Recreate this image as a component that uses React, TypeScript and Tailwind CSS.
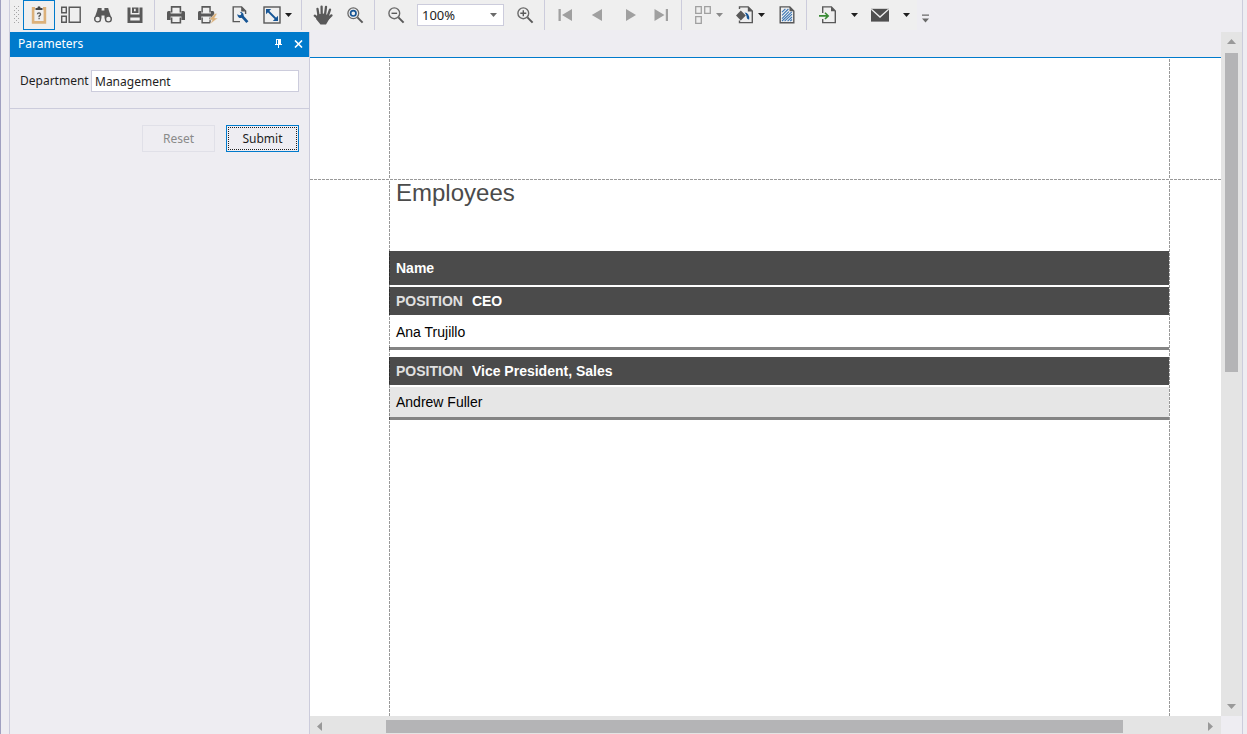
import React, { useState } from "react";

interface IconProps {
  children: React.ReactNode;
}

interface ToolButtonProps {
  label: string;
  active?: boolean;
  disabled?: boolean;
  children: React.ReactNode;
}

const Icon: React.FC<IconProps> = ({ children }) => (
  <svg width="18" height="18" viewBox="0 0 18 18" fill="none" className="shrink-0">
    {children}
  </svg>
);

const Caret: React.FC = () => (
  <svg width="7" height="4" viewBox="0 0 7 4" className="shrink-0">
    <path d="M0 0H7L3.5 4Z" fill="currentColor" />
  </svg>
);

const ToolButton: React.FC<ToolButtonProps> = ({ label, active, disabled, children }) => (
  <button
    aria-label={label}
    title={label}
    disabled={disabled}
    className={`flex h-[30px] w-8 shrink-0 items-center justify-center ${
      active ? "border border-[#007acc]" : ""
    }`}
  >
    {children}
  </button>
);

// Icon and caret in one button
const DropButton: React.FC<ToolButtonProps> = ({ label, disabled, children }) => (
  <button
    aria-label={label}
    title={label}
    disabled={disabled}
    className="flex h-[30px] w-[42px] shrink-0 items-center gap-1 pl-[7px] text-[#1e1e1e] disabled:text-[#8a8a8a]"
  >
    {children}
    <Caret />
  </button>
);

const CaretButton: React.FC<{ label: string }> = ({ label }) => (
  <button
    aria-label={label}
    className="flex h-[30px] w-5 shrink-0 items-center justify-center text-[#1e1e1e]"
  >
    <Caret />
  </button>
);

const Separator: React.FC = () => (
  <div className="mr-[5px] ml-[3px] h-[30px] w-px shrink-0 bg-[#ccccdc]" />
);

const PrinterShape: React.FC = () => (
  <>
    <path d="M4.6 6.5V0.9H13.4V6.5" stroke="#595959" strokeWidth="1.6" />
    <path
      d="M1.5 5H3.6V7.6H14.4V5H16.5Q18 5 18 6.5V14H14.4V10.4H3.6V14H0V6.5Q0 5 1.5 5Z"
      fill="#595959"
    />
    <path d="M4.6 11.5V16.8H13.4V11.5" stroke="#595959" strokeWidth="1.6" />
  </>
);

const Toolbar: React.FC = () => {
  const [zoom, setZoom] = useState("100%");

  return (
    <div className="flex h-8 shrink-0 items-start">
      <div className="flex h-[30px] items-center bg-[#efefef] pr-px">
        {/* Drag handle */}
        <svg width="13" height="18" viewBox="0 0 13 18" className="shrink-0">
          <defs>
            <pattern id="grip" width="4" height="4" patternUnits="userSpaceOnUse">
              <rect width="1" height="1" fill="#a5a5a5" />
              <rect x="2" y="2" width="1" height="1" fill="#a5a5a5" />
            </pattern>
          </defs>
          <rect x="4" width="5" height="18" fill="url(#grip)" />
        </svg>

        <ToolButton label="Parameters" active>
          <Icon>
            <path d="M5 2.4H3.1V16.4H14.9V2.4H13" stroke="#dcb17a" strokeWidth="2.6" />
            <path d="M5.5 4V2H7.4Q7.5 0.2 9 0.2T10.6 2H12.5V4Z" fill="#444" />
            <path
              d="M7.4 8.2Q7.5 6.9 9 6.9T10.6 8.3Q10.6 9.3 9.1 10.1V11.2M9.1 12V13.3"
              stroke="#555"
              strokeWidth="1.3"
            />
          </Icon>
        </ToolButton>
        <ToolButton label="Thumbnails">
          <svg width="20" height="18" viewBox="0 0 20 18" fill="none">
            <path
              d="M0.7 1.2H5.3V6.8H0.7ZM0.7 10.2H5.3V16.2H0.7ZM8.2 1.2H19.2V16.2H8.2Z"
              stroke="#595959"
              strokeWidth="1.4"
            />
          </svg>
        </ToolButton>
        <ToolButton label="Search">
          <Icon>
            <path
              d="M3.8 2H7.6V4.6H10.4V2H14.2L15 5L17.6 12.5H10.5V9.5H7.5V12.5H0.4L3 5Z"
              fill="#595959"
            />
            <circle cx="3.6" cy="13" r="2.9" fill="#efefef" stroke="#595959" strokeWidth="1.4" />
            <circle cx="14.4" cy="13" r="2.9" fill="#efefef" stroke="#595959" strokeWidth="1.4" />
          </Icon>
        </ToolButton>
        <ToolButton label="Save">
          <Icon>
            <path
              fillRule="evenodd"
              d="M1.5 1.5H4.5V8.5H13.5V1.5H16.5V17H1.5ZM4.3 11.5H13.7V14.5H4.3Z"
              fill="#595959"
            />
            <path fillRule="evenodd" d="M6 1.5H12.5V7H6ZM8 2.8V5.2H9.7V2.8Z" fill="#595959" />
          </Icon>
        </ToolButton>
        <Separator />

        <ToolButton label="Print">
          <Icon>
            <PrinterShape />
          </Icon>
        </ToolButton>
        <ToolButton label="Quick Print">
          <svg width="20" height="18" viewBox="0 0 20 18" fill="none">
            <g transform="scale(0.9 1)">
              <PrinterShape />
            </g>
            <path
              d="M17 7.6L11 13.8H14.2L12.2 18L20 12H16.6L19.2 7.6Z"
              fill="#dcb17a"
              stroke="#efefef"
              strokeWidth="0.5"
            />
          </svg>
        </ToolButton>
        <ToolButton label="Page Setup">
          <Icon>
            <path d="M14.6 8V5L10.6 0.9H2.2V15.6H9" stroke="#595959" strokeWidth="1.4" />
            <path d="M10.2 0.8V5.4H14.8Z" fill="#595959" />
            <path d="M10.6 9.6L16.4 16.2" stroke="#165595" strokeWidth="2.8" />
            <path
              d="M8.6 5.7L10.4 7.6L9.8 9L8 9.3L6.4 8Q6.1 11 8 11.7Q9.8 12.4 11.6 11.6Q13.3 9.6 12.4 7.7Q11.2 5.7 8.6 5.7Z"
              fill="#165595"
            />
          </Icon>
        </ToolButton>
        <DropButton label="Scale">
          <Icon>
            <rect x="1" y="1" width="16" height="16" stroke="#595959" strokeWidth="1.4" />
            <path d="M5 5L13 13" stroke="#165595" strokeWidth="1.8" />
            <path d="M3 3H8.2L3 8.2ZM15 15H9.8L15 9.8Z" fill="#165595" />
          </Icon>
        </DropButton>
        <Separator />

        <ToolButton label="Hand Tool">
          <svg width="20" height="20" viewBox="0 0 20 20" fill="none">
            <path
              d="M5.6 11L4.5 3.8M8.7 10L8.6 1.6M12 10L13 1.8M14.6 11.5L17 4.6M6.5 14.5L1.8 10.7M14.8 14L18.4 10.4"
              stroke="#595959"
              strokeWidth="2.3"
              strokeLinecap="round"
            />
            <path d="M4.4 9.5L10 8.5L16 10.2L17.4 12L14.5 17L13 19.6H7.5L3 14Z" fill="#595959" />
          </svg>
        </ToolButton>
        <ToolButton label="Magnifier">
          <Icon>
            <circle cx="7.3" cy="7.3" r="5.4" stroke="#6a6a6a" strokeWidth="1.3" />
            <circle cx="7.3" cy="7.3" r="2.7" stroke="#165595" strokeWidth="1.7" />
            <path d="M11.4 11.4L16.6 16.6" stroke="#595959" strokeWidth="2" />
          </Icon>
        </ToolButton>
        <Separator />

        <ToolButton label="Zoom Out">
          <Icon>
            <circle cx="7.3" cy="7.3" r="5.4" stroke="#6a6a6a" strokeWidth="1.4" />
            <path d="M4.5 7.3H10.1" stroke="#595959" strokeWidth="1.4" />
            <path d="M11.4 11.4L16.6 16.6" stroke="#595959" strokeWidth="2" />
          </Icon>
        </ToolButton>
        <div className="relative mx-[5px] flex h-[22px] w-[87px] items-center text-[#6a6a6a]">
          <select
            aria-label="Zoom"
            value={zoom}
            onChange={(e) => setZoom(e.target.value)}
            className="h-full w-full appearance-none border border-[#ccccdc] bg-white pl-1 text-[13px] text-[#1e1e1e]"
          >
            <option>50%</option>
            <option>100%</option>
            <option>200%</option>
          </select>
          <span className="pointer-events-none absolute right-[7px]">
            <Caret />
          </span>
        </div>
        <ToolButton label="Zoom In">
          <Icon>
            <circle cx="7.3" cy="7.3" r="5.4" stroke="#6a6a6a" strokeWidth="1.4" />
            <path d="M4.3 7.3H10.3M7.3 4.3V10.3" stroke="#595959" strokeWidth="1.4" />
            <path d="M11.4 11.4L16.6 16.6" stroke="#595959" strokeWidth="2" />
          </Icon>
        </ToolButton>
        <Separator />

        <ToolButton label="First Page" disabled>
          <Icon>
            <path d="M1.5 3H3.8V15H1.5ZM15 3V15L5 9Z" fill="#a0a0a0" />
          </Icon>
        </ToolButton>
        <ToolButton label="Previous Page" disabled>
          <Icon>
            <path d="M13 3V15L2.8 9Z" fill="#a0a0a0" />
          </Icon>
        </ToolButton>
        <ToolButton label="Next Page" disabled>
          <Icon>
            <path d="M5 3V15L15 9Z" fill="#a0a0a0" />
          </Icon>
        </ToolButton>
        <ToolButton label="Last Page" disabled>
          <Icon>
            <path d="M1.5 3V15L11.5 9ZM12.8 3H15V15H12.8Z" fill="#a0a0a0" />
          </Icon>
        </ToolButton>
        <Separator />

        <DropButton label="Multiple Pages" disabled>
          <Icon>
            <path
              d="M1.7 0.7H7.3V7.3H1.7ZM10.7 0.7H16.3V7.3H10.7ZM1.7 10.7H7.3V17.3H1.7Z"
              stroke="#a0a0a0"
              strokeWidth="1.3"
            />
          </Icon>
        </DropButton>
        <DropButton label="Page Color">
          <Icon>
            <path d="M3.5 3V0.9H12.2L16.3 5V16.6H3.5V14.4" stroke="#595959" strokeWidth="1.4" />
            <path d="M11.8 0.8V5.4H16.5Z" fill="#595959" />
            <path d="M0 9.5L4.8 4.6L9.8 9.5L4.8 14.4Z" fill="#595959" />
            <path d="M8.6 6.4Q13.6 6.8 13.2 13.4Q10.8 13.6 10.6 10.5Q10.4 8.2 8.6 6.4Z" fill="#165595" />
          </Icon>
        </DropButton>
        <ToolButton label="Watermark">
          <Icon>
            <path d="M2.2 0.9H11.8L15.8 5V16.7H2.2Z" stroke="#595959" strokeWidth="1.4" />
            <path d="M11.5 0.8V5.2H16Z" fill="#595959" />
            <path
              d="M4 6.2L7.4 2.8M4 9.4L10.4 3M4 12.6L10.9 5.7M4 15L13.8 5.9M6.6 15.2L14 8.2M9.6 15.2L14 11M12.2 15.2L14 13.5"
              stroke="#3a76b5"
              strokeWidth="1.1"
            />
          </Icon>
        </ToolButton>
        <Separator />

        <ToolButton label="Export Document">
          <Icon>
            <path d="M3.7 7V0.9H12.4L16.3 5V16.6H3.7V13" stroke="#595959" strokeWidth="1.4" />
            <path d="M12 0.8V5.2H16.5Z" fill="#595959" />
            <path d="M0 9.9H9M6 6.8L9.2 9.9L6 13" stroke="#388a34" strokeWidth="1.6" />
          </Icon>
        </ToolButton>
        <CaretButton label="Export formats" />
        <ToolButton label="Send E-mail">
          <Icon>
            <path d="M0 2.8H18V15.6H0Z" fill="#4f4f4f" />
            <path d="M0.3 3.2L9 11L17.7 3.2" stroke="#efefef" strokeWidth="1.4" />
          </Icon>
        </ToolButton>
        <CaretButton label="E-mail formats" />
      </div>
      {/* Overflow */}
      <button aria-label="More" className="flex h-[30px] w-4 items-center justify-center pt-[7px]">
        <svg width="7" height="9" viewBox="0 0 7 9">
          <path d="M0 0.5H7V1.7H0ZM0 4.5H7L3.5 8.5Z" fill="#6a6a6a" />
        </svg>
      </button>
    </div>
  );
};

const ParametersPanel: React.FC = () => {
  const [department, setDepartment] = useState("Management");

  return (
    <aside className="w-[300px] shrink-0 border-r border-[#ccccdc]">
      <header className="flex h-[25px] items-center bg-[#007acc] pr-px pb-0.5 pl-2 text-white">
        <h2 className="grow">Parameters</h2>
        <button aria-label="Pin" className="flex h-5 w-5 items-center justify-center">
          <svg width="7" height="9" viewBox="0 0 7 9">
            <path fillRule="evenodd" d="M1 0H6V5H7V6H4V9H3V6H0V5H1ZM2 1V5H3V1Z" fill="currentColor" />
          </svg>
        </button>
        <button aria-label="Close" className="flex h-5 w-5 items-center justify-center">
          <svg width="9" height="8" viewBox="0 0 9 8">
            <path d="M1 0.5L8 7.5M8 0.5L1 7.5" stroke="currentColor" strokeWidth="1.6" />
          </svg>
        </button>
      </header>
      <div className="flex items-center gap-1 border-b border-[#ccccdc] pt-[13px] pr-[10px] pb-4 pl-[10px]">
        <label htmlFor="department" className="w-[67px] whitespace-nowrap">
          Department
        </label>
        <input
          id="department"
          value={department}
          onChange={(e) => setDepartment(e.target.value)}
          className="h-[22px] min-w-0 grow border border-[#ccccdc] bg-white px-[3px]"
        />
      </div>
      <div className="flex justify-end gap-[11px] px-[10px] pt-4">
        <button disabled className="h-[27px] w-[73px] border border-[#e0e0e8] text-[#8a8a8a]">
          Reset
        </button>
        <button className="h-[27px] w-[73px] border border-[#007acc] p-px">
          <span className="flex h-full items-center justify-center border border-dotted border-[#1e1e1e]">
            Submit
          </span>
        </button>
      </div>
    </aside>
  );
};

const groups = [
  { position: "CEO", names: ["Ana Trujillo"], shaded: false },
  { position: "Vice President, Sales", names: ["Andrew Fuller"], shaded: true },
];

const VerticalGuide: React.FC = () => (
  <div className="z-10 w-px shrink-0 bg-[repeating-linear-gradient(to_bottom,transparent_0_1px,rgba(0,0,0,0.4)_1px_4px)]" />
);

const ReportPage: React.FC = () => (
  <div className="flex min-h-0 grow flex-col overflow-hidden bg-white font-['Liberation_Sans',sans-serif]">
    <div className="flex h-[121px] shrink-0">
      <div className="w-[79px]" />
      <VerticalGuide />
      <div className="grow" />
      <VerticalGuide />
      <div className="w-[51px]" />
    </div>
    <div className="h-px shrink-0 bg-[repeating-linear-gradient(to_right,rgba(0,0,0,0.4)_0_3px,transparent_3px_4px)]" />
    <div className="flex grow">
      <div className="w-[79px] shrink-0" />
      <VerticalGuide />
      <div className="-ml-px grow">
        <h1 className="h-[71px] pl-[7px] text-2xl leading-[26px] text-[#4b4b4b]">Employees</h1>
        <table className="w-full border-separate border-spacing-0 text-left text-sm leading-4">
          <thead>
            <tr>
              <th className="h-9 border-b-2 border-white bg-[#4b4b4b] px-[7px] py-0 text-white">Name</th>
            </tr>
          </thead>
          {groups.map((group, i) => (
            <tbody key={group.position}>
              <tr>
                <th
                  className={`border-b-2 border-white bg-[#4b4b4b] px-[7px] py-0 text-white ${
                    i > 0 ? "h-[37px] border-t-[7px]" : "h-[30px]"
                  }`}
                >
                  <span className="mr-[9px] text-[#e0e0e0]">POSITION</span>
                  {group.position}
                </th>
              </tr>
              {group.names.map((name) => (
                <tr key={name}>
                  <td
                    className={`h-[33px] border-b-[3px] border-[#848484] px-[7px] py-0 text-black ${
                      group.shaded ? "bg-[#e6e6e6]" : ""
                    }`}
                  >
                    {name}
                  </td>
                </tr>
              ))}
            </tbody>
          ))}
        </table>
      </div>
      <VerticalGuide />
      <div className="w-[51px] shrink-0" />
    </div>
  </div>
);

const ScrollArrow: React.FC<{ label: string; d: string }> = ({ label, d }) => (
  <button
    aria-label={label}
    className="flex h-[18px] w-[18px] shrink-0 items-center justify-center text-[#999]"
  >
    <svg width="9" height="9" viewBox="0 0 9 9">
      <path d={d} fill="currentColor" />
    </svg>
  </button>
);

const Viewer: React.FC = () => (
  <main className="flex min-w-0 grow">
    <div className="flex min-w-0 grow flex-col">
      <div className="h-[26px] shrink-0 border-b border-[#007acc]" />
      <ReportPage />
      <div className="flex h-[18px] shrink-0 items-center bg-[#e4e4e4] pt-0.5 pr-0.5">
        <ScrollArrow label="Scroll left" d="M7 0V9L2 4.5Z" />
        <div className="min-w-0 grow pt-px pl-[58px]">
          <div className="h-[13px] w-[90.4%] bg-[#b4b4b6]" />
        </div>
        <ScrollArrow label="Scroll right" d="M2 0V9L7 4.5Z" />
      </div>
    </div>
    <div className="flex w-[21px] shrink-0 flex-col">
      <div className="flex grow flex-col items-center bg-[#e4e4e4] pb-px">
        <ScrollArrow label="Scroll up" d="M0 7H9L4.5 2Z" />
        <div className="w-[13px] grow pt-[3px]">
          <div className="h-[49.5%] bg-[#b4b4b6]" />
        </div>
        <ScrollArrow label="Scroll down" d="M0 2H9L4.5 7Z" />
      </div>
      <div className="h-[18px] shrink-0" />
    </div>
  </main>
);

const App: React.FC = () => {
  return (
    <div className="flex h-screen overflow-hidden border-l border-[#a0a0c0] bg-[#eeedf2] pr-1 pl-2 font-['Noto_Sans',sans-serif] text-xs leading-4 text-[#1e1e1e]">
      <div className="flex min-w-0 grow flex-col border-x border-[#ccccdc]">
        <Toolbar />
        <div className="flex min-h-0 grow">
          <ParametersPanel />
          <Viewer />
        </div>
      </div>
    </div>
  );
};

export default App;
